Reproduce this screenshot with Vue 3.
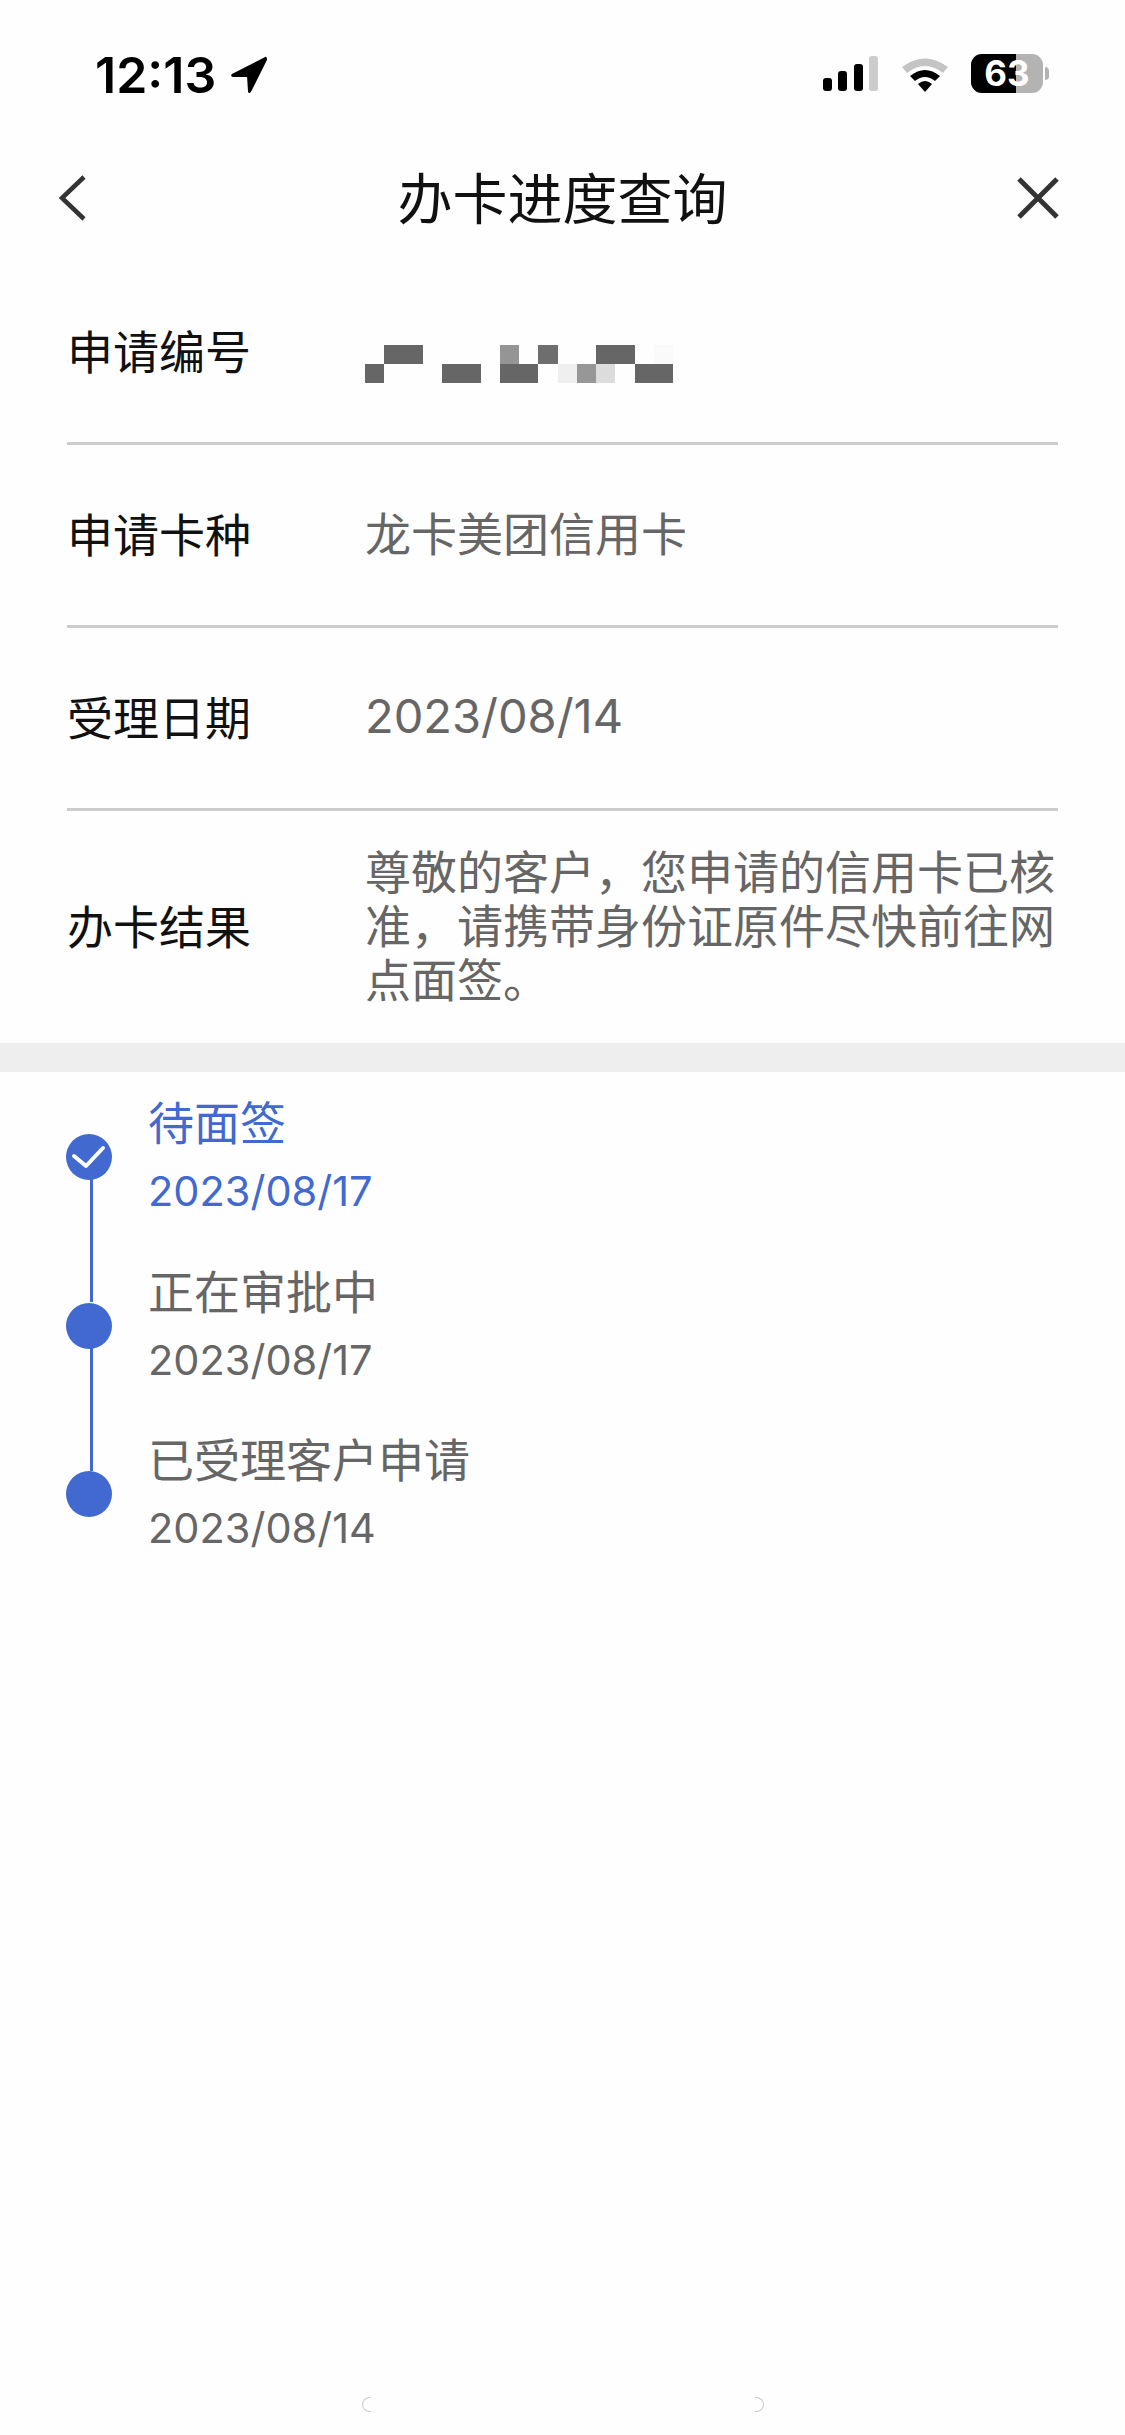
<template>
  <div class="page">
    <div class="status-bar">
      <div class="time-wrap">
        <span class="time">12:13</span>
        <svg class="loc" viewBox="0 0 40 40" width="40" height="38"><path d="M37 1 L2 19 Q0 21 3 22 L18 22 L19 38 Q20 40 22 38 L39 4 Q39 0 37 1 Z" fill="#000"/></svg>
      </div>
      <div class="status-icons">
        <svg viewBox="0 0 56 36" width="56" height="36">
          <rect x="0" y="22" width="9" height="13" rx="3" fill="#000"/>
          <rect x="15" y="15" width="9" height="20" rx="3" fill="#000"/>
          <rect x="31" y="8" width="9" height="27" rx="3" fill="#000"/>
          <rect x="46" y="0" width="9" height="35" rx="3" fill="#ccc"/>
        </svg>
        <svg viewBox="0 0 48 36" width="48" height="36">
          <path d="M1 11 Q24 -6 47 11 L42 17 Q24 3 6 17 Z" fill="#c4c4c4"/>
          <path d="M9 20 Q24 8 39 20 L34 25 Q24 17 14 25 Z" fill="#000"/>
          <path d="M17 28 Q24 22 31 28 L24 36 Z" fill="#000"/>
        </svg>
        <div class="battery">
          <div class="battery-body">
            <div class="battery-fill"></div>
            <span class="battery-num">63</span>
          </div>
          <div class="battery-cap"></div>
        </div>
      </div>
    </div>

    <div class="nav">
      <svg class="nav-icon" viewBox="0 0 32 48" width="32" height="48"><path d="M28 3 L6 24 L28 45" fill="none" stroke="#333" stroke-width="4.5"/></svg>
      <h1 class="nav-title">办卡进度查询</h1>
      <svg class="nav-icon" viewBox="0 0 44 44" width="44" height="44"><path d="M3 3 L41 41 M41 3 L3 41" fill="none" stroke="#333" stroke-width="5"/></svg>
    </div>

    <div class="info">
      <div class="row">
        <div class="label">申请编号</div>
        <div class="value mosaic">
          <div v-for="(c, i) in mosaicCells" :key="i" class="cell" :style="{ gridColumn: c.x + 1, gridRow: c.y + 1, background: c.color }"></div>
        </div>
      </div>
      <div class="row">
        <div class="label">申请卡种</div>
        <div class="value">龙卡美团信用卡</div>
      </div>
      <div class="row">
        <div class="label">受理日期</div>
        <div class="value num">2023/08/14</div>
      </div>
      <div class="row result">
        <div class="label">办卡结果</div>
        <div class="value">尊敬的客户，您申请的信用卡已核准，请携带身份证原件尽快前往网点面签。</div>
      </div>
    </div>

    <div class="band"></div>

    <div class="timeline">
      <div v-for="(s, i) in steps" :key="i" class="step" :class="{ active: i === 0 }">
        <div class="node">
          <svg v-if="i === 0" viewBox="0 0 46 46" width="46" height="46">
            <path d="M8 22 L20 32 L37 14" fill="none" stroke="#fff" stroke-width="4" stroke-linecap="round" stroke-linejoin="round"/>
          </svg>
        </div>
        <div class="step-text">
          <div class="step-title">{{ s.title }}</div>
          <div class="step-date">{{ s.date }}</div>
        </div>
      </div>
    </div>

    <div class="home-hint">
      <span class="hint-l"></span>
      <span class="hint-r"></span>
    </div>
  </div>
</template>

<script setup>
const steps = [
  { title: "待面签", date: "2023/08/17" },
  { title: "正在审批中", date: "2023/08/17" },
  { title: "已受理客户申请", date: "2023/08/14" },
];

const dark = "#666";
const mosaicCells = [
  { x: 1, y: 0, color: dark }, { x: 2, y: 0, color: dark },
  { x: 0, y: 1, color: dark },
  { x: 4, y: 1, color: dark }, { x: 5, y: 1, color: dark },
  { x: 7, y: 0, color: "#959595" },
  { x: 7, y: 1, color: dark }, { x: 8, y: 1, color: dark },
  { x: 9, y: 0, color: "#6e6e6e" },
  { x: 10, y: 1, color: "#efefef" },
  { x: 11, y: 1, color: "#979797" },
  { x: 12, y: 0, color: dark }, { x: 13, y: 0, color: dark },
  { x: 12, y: 1, color: "#dcdcdc" },
  { x: 14, y: 1, color: dark }, { x: 15, y: 1, color: dark },
  { x: 15, y: 0, color: "#fafafa" },
];
</script>

<style>
html, body { margin: 0; background: #fefefe; }
</style>

<style scoped>
.page {
  width: 1125px;
  height: 2435px;
  position: relative;
  overflow: hidden;
  background: #fefefe;
  font-family: "Noto Sans CJK SC", "Inter", sans-serif;
  color: #000;
}

.status-bar {
  height: 150px;
  box-sizing: border-box;
  padding: 54px 76px 0 95px;
  display: flex;
  justify-content: space-between;
  align-items: flex-start;
}

.time-wrap {
  display: flex;
  align-items: center;
  gap: 13px;
}

.time {
  font-family: "Inter", sans-serif;
  font-weight: 600;
  font-size: 50px;
  line-height: 42px;
}

.status-icons {
  display: flex;
  align-items: center;
  gap: 22px;
}

.battery {
  display: flex;
  align-items: center;
  gap: 2px;
}

.battery-body {
  width: 72px;
  height: 39px;
  border-radius: 11px;
  background: #b3b3b3;
  position: relative;
  display: flex;
  align-items: center;
  justify-content: center;
}

.battery-fill {
  position: absolute;
  left: 0;
  top: 0;
  bottom: 0;
  width: 45px;
  background: #000;
  border-radius: 11px 0 0 11px;
}

.battery-num {
  position: relative;
  color: #fff;
  font-family: "Inter", sans-serif;
  font-weight: 700;
  font-size: 35px;
  line-height: 39px;
}

.battery-cap {
  width: 4px;
  height: 13px;
  background: #b3b3b3;
  border-radius: 0 4px 4px 0;
}

.nav {
  height: 96px;
  padding: 0 65px 0 56px;
  display: flex;
  align-items: center;
  justify-content: space-between;
  position: relative;
}

.nav-title {
  margin: 0;
  font-weight: 400;
  font-size: 55px;
  line-height: 90px;
  color: #111;
  position: absolute;
  left: 0;
  right: 0;
  top: 0;
  text-align: center;
}

.info {
  margin-top: 16px;
  padding: 0 67px;
}

.row {
  height: 183px;
  display: flex;
  align-items: center;
  border-bottom: 3px solid #ccc;
  box-sizing: border-box;
  padding-bottom: 6px;
  font-size: 46px;
}

.row.result {
  height: 232px;
  border-bottom: none;
}

.label {
  width: 298px;
  flex: none;
  color: #111;
}

.value {
  flex: 1;
  font-size: 46px;
  line-height: 54px;
  padding-bottom: 2px;
  color: #666;
}

.value.num {
  font-family: "Inter", sans-serif;
  font-size: 47px;
  padding-bottom: 0;
  padding-top: 2px;
}

.mosaic {
  flex: none;
  display: grid;
  grid-template-columns: repeat(16, 19.25px);
  grid-template-rows: repeat(2, 19px);
  padding-bottom: 0;
  margin-top: 30px;
}

.band {
  height: 29px;
  background: #eee;
}

.timeline {
  padding: 0 0 0 66px;
}

.step {
  position: relative;
  height: 168.5px;
  display: flex;
  align-items: flex-start;
  gap: 36px;
}

.node {
  width: 46px;
  height: 46px;
  margin-top: 62px;
  border-radius: 50%;
  background: #4169cf;
  flex: none;
  display: flex;
  align-items: center;
  justify-content: center;
}

.step:not(:last-child)::after {
  content: "";
  position: absolute;
  left: 24px;
  top: 100px;
  height: 130px;
  width: 3px;
  background: #4169cf;
}

.step-text {
  color: #666;
  padding-top: 15px;
}

.step-title {
  font-size: 46px;
  line-height: 66px;
}

.step-date {
  font-family: "Inter", sans-serif;
  font-size: 41.5px;
  line-height: 76px;
}

.active .step-text {
  color: #4169cf;
}

.home-hint {
  position: absolute;
  left: 362px;
  top: 2397px;
  width: 402px;
  height: 15px;
}

.hint-l, .hint-r {
  position: absolute;
  top: 0;
  width: 9px;
  height: 15px;
  box-sizing: border-box;
  border: 1px solid #ccc;
}

.hint-l {
  left: 0;
  border-right: none;
  border-radius: 8px 0 0 8px;
}

.hint-r {
  right: 0;
  border-left: none;
  border-radius: 0 8px 8px 0;
}
</style>
